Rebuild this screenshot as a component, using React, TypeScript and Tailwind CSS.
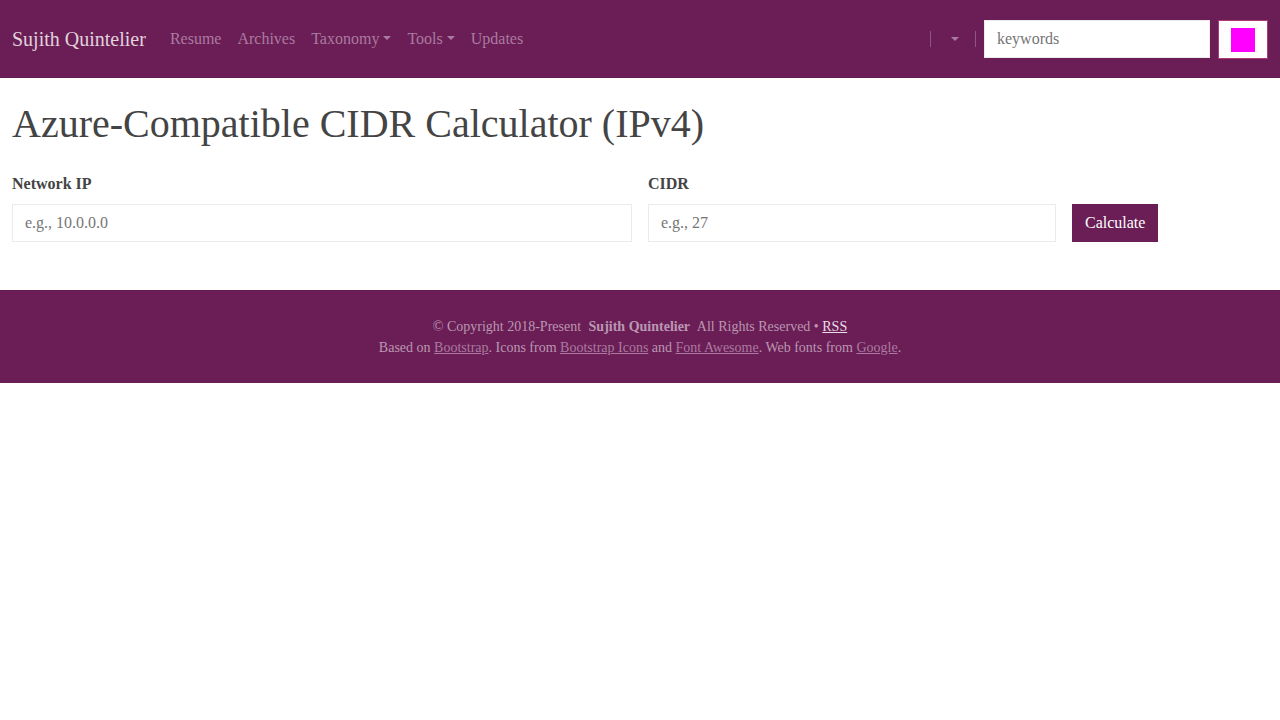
import type { ReactNode } from "react";

function Caret() {
  return (
    <svg className="h-1 w-2 fill-current" viewBox="0 0 8 4" aria-hidden="true">
      <path d="M0 0H8L4 4Z" />
    </svg>
  );
}

function NavLink({ children }: { children: ReactNode }) {
  return (
    <a href="#" className="p-2 text-[#aa7aa0]">
      {children}
    </a>
  );
}

function NavMenu({ children }: { children: ReactNode }) {
  return (
    <button type="button" className="flex items-center gap-1 p-2 text-[#aa7aa0]">
      {children}
      <span className="pb-0.5">
        <Caret />
      </span>
    </button>
  );
}

function Divider() {
  return <span className="h-4 w-px bg-[#8f5680]" />;
}

function Header() {
  return (
    <header className="border-b border-[#631b50] bg-[#6a1e55] px-3 pt-[19px] pb-[18px]">
      <nav className="flex items-center">
        <a href="#" className="mr-4 text-xl text-[#e1d2dd]">
          Sujith Quintelier
        </a>
        <div className="flex flex-1 items-center">
          <NavLink>Resume</NavLink>
          <NavLink>Archives</NavLink>
          <NavMenu>Taxonomy</NavMenu>
          <NavMenu>Tools</NavMenu>
          <NavLink>Updates</NavLink>
        </div>
        <Divider />
        <button type="button" aria-label="Theme" className="flex h-10 w-11 items-center justify-center pl-1 text-[#aa7aa0]">
          <Caret />
        </button>
        <Divider />
        <form className="ml-2 flex items-center gap-2">
          <input
            type="search"
            aria-label="Search"
            placeholder="keywords"
            className="h-[38px] w-[226px] border border-[#ebebeb] bg-white px-3 text-[#444444] placeholder:text-[#757575]"
          />
          <button
            type="button"
            aria-label="Submit search"
            className="flex h-[39px] w-[50px] justify-center border border-[#b03a78] bg-white pt-[7px]"
          >
            <span className="size-6 bg-[#ff00ff]" />
          </button>
        </form>
      </nav>
    </header>
  );
}

function Field({ id, label, placeholder }: { id: string; label: string; placeholder: string }) {
  return (
    <div>
      <label htmlFor={id} className="mb-2 block font-bold">
        {label}
      </label>
      <input
        id={id}
        type="text"
        placeholder={placeholder}
        className="block h-[38px] w-full border border-[#ebebeb] bg-white px-3 placeholder:text-[#757575]"
      />
    </div>
  );
}

function Calculator() {
  return (
    <main className="px-3 pt-[22px] pb-12">
      <h1 className="text-[40px] leading-[48px]">Azure-Compatible CIDR Calculator (IPv4)</h1>
      <form className="mt-6 grid grid-cols-12 items-end gap-4">
        <div className="col-span-6">
          <Field id="network" label="Network IP" placeholder="e.g., 10.0.0.0" />
        </div>
        <div className="col-span-4">
          <Field id="cidr" label="CIDR" placeholder="e.g., 27" />
        </div>
        <div className="col-span-2">
          <button type="button" className="block h-[38px] bg-[#6a1e55] px-[13px] text-white">
            Calculate
          </button>
        </div>
      </form>
    </main>
  );
}

function FooterLink({ children }: { children: ReactNode }) {
  return (
    <a href="#" className="text-[#aa7aa0] underline">
      {children}
    </a>
  );
}

function Footer() {
  return (
    <footer className="border-t border-[#631b50] bg-[#6a1e55] px-3 py-[25px] text-center text-sm leading-[21px] text-[#ba97b3]">
      <p>
        © Copyright 2018-Present <strong className="px-1">Sujith Quintelier</strong> All Rights Reserved •{" "}
        <a href="#" className="text-[#e9dde6] underline">
          RSS
        </a>
      </p>
      <p>
        Based on <FooterLink>Bootstrap</FooterLink>. Icons from <FooterLink>Bootstrap Icons</FooterLink> and{" "}
        <FooterLink>Font Awesome</FooterLink>. Web fonts from <FooterLink>Google</FooterLink>.
      </p>
    </footer>
  );
}

export default function App() {
  return (
    <div className="bg-white font-['Liberation_Serif',serif] text-base text-[#444444]">
      <Header />
      <Calculator />
      <Footer />
    </div>
  );
}
